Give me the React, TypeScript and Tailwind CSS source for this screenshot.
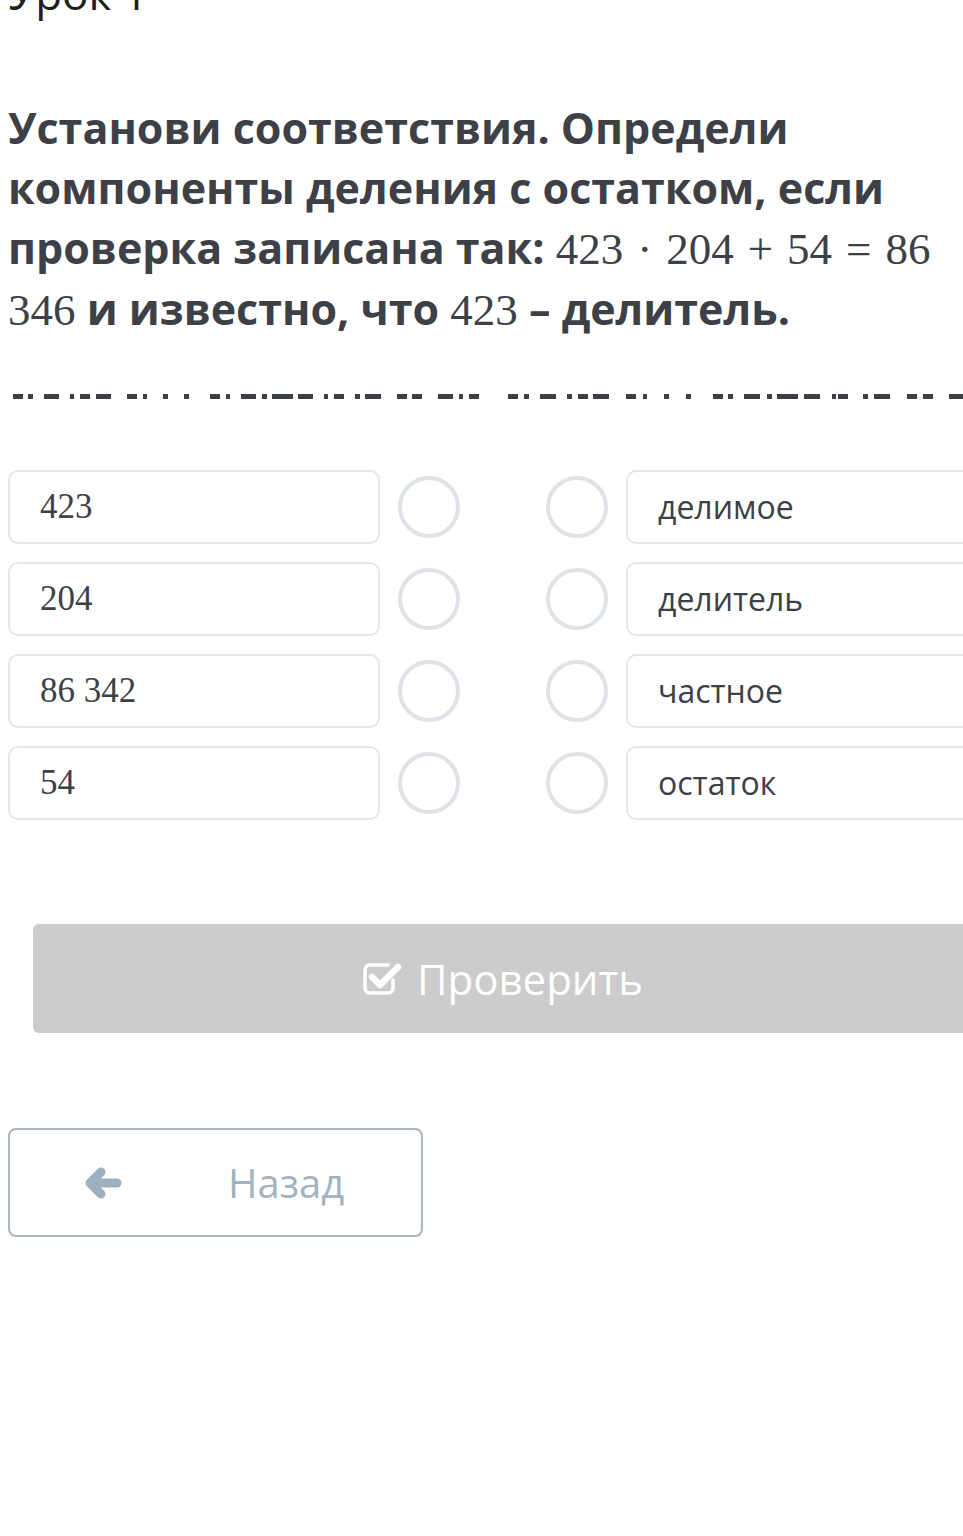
const dashes: [number, number][] = [
  [13, 23], [28, 33], [44, 59], [70, 74], [80, 90], [96, 111], [127, 137], [143, 147],
  [163, 168], [184, 189], [210, 220], [226, 230], [241, 256], [262, 267], [272, 293], [298, 313],
  [324, 328], [334, 344], [355, 360], [365, 381], [397, 407], [412, 422], [438, 453], [459, 463],
  [469, 479], [508, 518], [524, 529], [540, 556], [567, 572], [578, 588], [593, 609], [626, 636],
  [643, 647], [664, 669], [686, 691], [713, 723], [728, 733], [744, 760], [767, 772], [777, 798],
  [804, 820], [832, 836], [838, 848], [863, 868], [874, 890], [907, 917], [923, 933], [949, 963],
];

const left = ["423", "204", "86 342", "54"];
const right = ["делимое", "делитель", "частное", "остаток"];

function M({ children }: { children: React.ReactNode }) {
  return (
    <span className="font-['Liberation_Serif',serif] text-[45px] font-normal">{children}</span>
  );
}

function Op({ children }: { children: React.ReactNode }) {
  return <span className="mx-[14px]">{children}</span>;
}

function Circle() {
  return <div className="h-[62px] w-[62px] shrink-0 rounded-full border-4 border-[#dfe3e7]" />;
}

function CheckSquare() {
  return (
    <svg width="40" height="36" viewBox="0 0 40 36" fill="none">
      <path
        d="M30 19 v8 a5 5 0 0 1 -5 5 H7 a5 5 0 0 1 -5 -5 V9 a5 5 0 0 1 5 -5 H25"
        stroke="white"
        strokeWidth="3.5"
        strokeLinecap="round"
      />
      <path d="M9 16 L17 24 L35 6" stroke="white" strokeWidth="6.5" strokeLinecap="round" strokeLinejoin="round" />
    </svg>
  );
}

function ArrowLeft() {
  return (
    <svg width="38" height="32" viewBox="0 0 38 32" fill="none">
      <path d="M33 16 H9" stroke="#9db0bf" strokeWidth="9" strokeLinecap="round" />
      <path d="M17 5 L6 16 L17 27" stroke="#9db0bf" strokeWidth="9" strokeLinecap="round" strokeLinejoin="round" />
    </svg>
  );
}

export default function App() {
  return (
    <div className="h-[1536px] w-[963px] overflow-hidden bg-white font-['Open_Sans',sans-serif] text-[#3d4147]">
      <div className="ml-2 w-[990px]">
        <div className="mt-[-29px] text-[44px] leading-[44px] text-[#1d1f22]">Урок 1</div>

        <div className="mt-[83px] text-[43px] font-bold leading-[60px]">
          Установи соответствия. Определи
          <br />
          компоненты деления с остатком, если
          <br />
          проверка записана так: <M>423<Op>·</Op>204<Op>+</Op>54<Op>=</Op>86</M>
          <br />
          <M>346</M> и известно, что <M>423</M> – делитель.
        </div>

        <div className="relative mt-[54px] h-[5px] w-[963px] -translate-x-2">
          {dashes.map(([a, b], i) => (
            <span
              key={i}
              className="absolute top-0 h-[5px] bg-[#3c4045]"
              style={{ left: a, width: b - a }}
            />
          ))}
        </div>

        <div className="mt-[71px] flex flex-col gap-[18px]">
          {left.map((l, i) => (
            <div key={l} className="flex h-[74px] items-center">
              <div className="flex h-full w-[372px] items-center rounded-[10px] border-2 border-[#e4e6e8] pl-[30px] font-['Liberation_Serif',serif] text-[35px]">
                {l}
              </div>
              <div className="ml-[18px]">
                <Circle />
              </div>
              <div className="ml-[86px]">
                <Circle />
              </div>
              <div className="ml-[18px] flex h-full w-[372px] items-center rounded-[10px] border-2 border-[#e4e6e8] pl-[30px] text-[32px]">
                {right[i]}
              </div>
            </div>
          ))}
        </div>

        <button
          type="button"
          className="ml-[25px] mt-[104px] flex h-[109px] w-[940px] items-center justify-center gap-[14px] rounded-[6px] bg-[#cccccc] text-[42px] text-white"
        >
          <CheckSquare />
          <span>Проверить</span>
        </button>

        <button
          type="button"
          className="mt-[95px] flex h-[109px] w-[415px] items-center rounded-[8px] border-2 border-[#aab5bd] text-[40px] text-[#a3b3bf]"
        >
          <span className="ml-[74px]">
            <ArrowLeft />
          </span>
          <span className="ml-[106px]">Назад</span>
        </button>
      </div>
    </div>
  );
}
